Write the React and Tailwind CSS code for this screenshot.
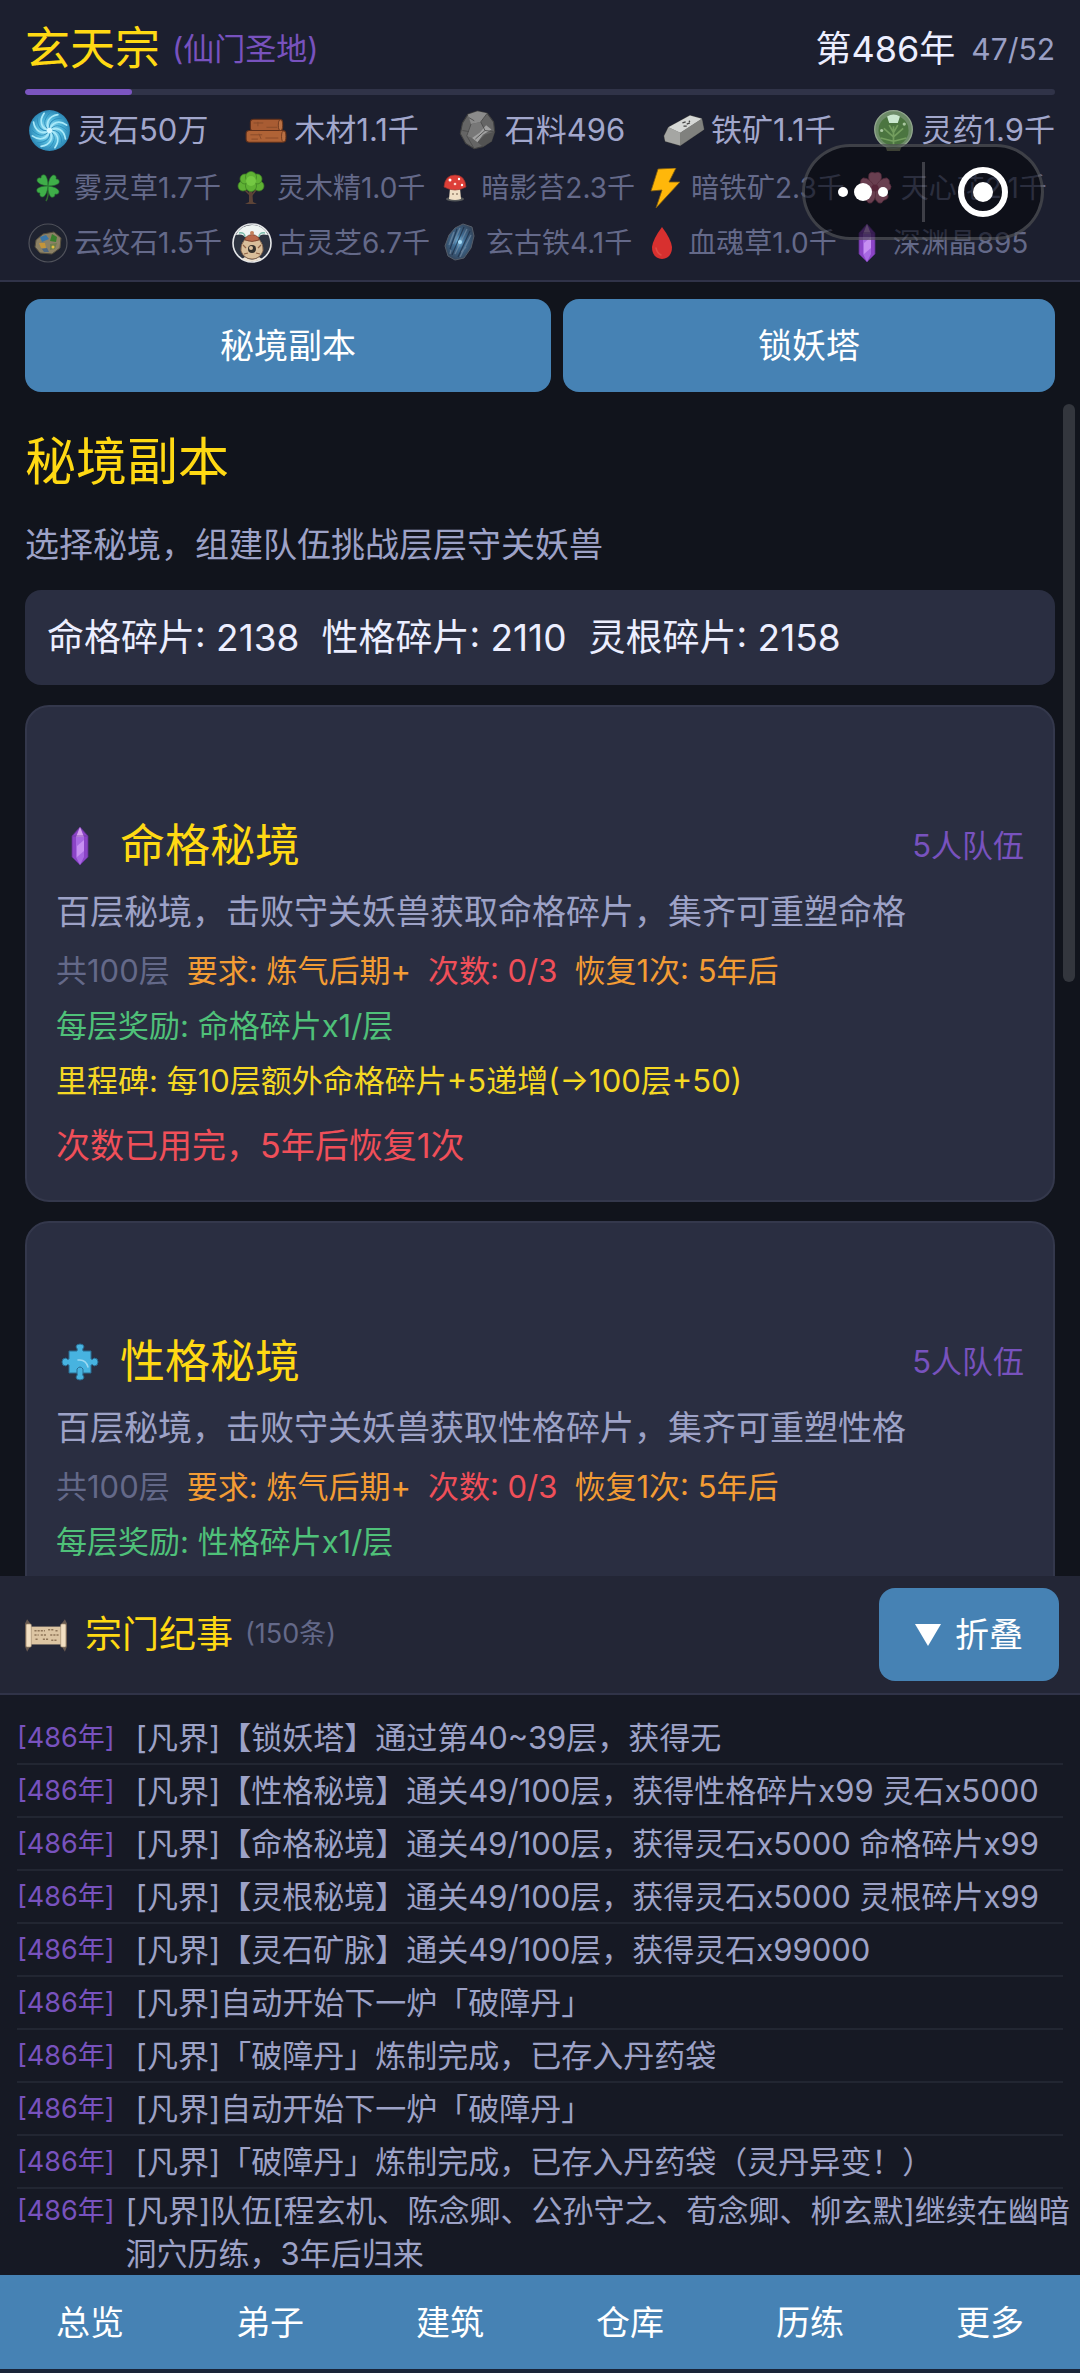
import React from "react";

const svgProps = { viewBox: "0 0 40 40", "aria-hidden": true, className: "h-full w-full" };

function SpiritStone() {
  const arms = [0, 45, 90, 135, 180, 225, 270, 315];
  return (
    <svg {...svgProps}>
      <defs>
        <radialGradient id="vortex">
          <stop offset="0" stopColor="#b5ecfa" />
          <stop offset="0.6" stopColor="#4fb6da" />
          <stop offset="1" stopColor="#2c86b4" />
        </radialGradient>
      </defs>
      <circle cx="20" cy="20" r="19" fill="url(#vortex)" />
      {arms.map((a) => (
        <g key={a} transform={`rotate(${a} 20 20)`} fill="none" strokeLinecap="round">
          <path d="M20 20C22 12 29 10 36 15" stroke="#a9e9f9" strokeWidth="1.6" />
          <path d="M20 20C24 14 30 14 36 20" stroke="#2d8fbd" strokeWidth="0.9" />
        </g>
      ))}
      <circle cx="20" cy="20" r="2.5" fill="#d5f6ff" />
    </svg>
  );
}

function Wood() {
  return (
    <svg {...svgProps}>
      <rect x="5" y="9.5" width="30" height="11" rx="3" fill="#a85c33" stroke="#5e2f1a" />
      <rect x="1" y="20" width="37" height="11" rx="3" fill="#b06336" stroke="#5e2f1a" />
      <ellipse cx="33" cy="15" rx="2" ry="5" fill="#b97043" stroke="#5e2f1a" strokeWidth="0.7" />
      <ellipse cx="36" cy="25.500" rx="2" ry="5" fill="#b97043" stroke="#5e2f1a" strokeWidth="0.7" />
      <path d="M8 13h9M20 17h10M5 24h11M19 27h12M6 28h6M12 12v4M13 23l2 5" stroke="#8a4c2a" strokeWidth="0.9" />
    </svg>
  );
}

function Rock() {
  return (
    <svg {...svgProps}>
      <path d="M11 5l9-3 9 2 6 8 1 9-3 9-8 5-8 2-8-5-5-9 2-10z" fill="#656565" stroke="#3f3f3f" />
      <path d="M11 5l9-3 9 2-6 8-9 2z" fill="#8b8b8b" />
      <path d="M14 14l9-2 4 8-9 8-8-3z" fill="#787878" />
      <path d="M28 15l5 4-8 5-5 7-5-4 7-5z" fill="#a2a2a2" />
      <path d="M27 24l9-3-3 9-8 5-5-4z" fill="#525252" />
      <path d="M14 14l-4 11 7 12M23 12l4 8-9 8M27 20l8 1M23 12l6-8M6 20l6 1M12 8l5 3" fill="none" stroke="#4a4a4a" strokeWidth="0.8" />
    </svg>
  );
}

function Ingot() {
  return (
    <svg {...svgProps}>
      <path d="M2 25l4-8 20-11 11 3 2 10-22 15-14-4z" fill="#6f706e" stroke="#4a4a48" strokeWidth="0.8" />
      <path d="M6 17l20-11 11 3-20 13z" fill="#d6d8d6" />
      <path d="M6 17l11 5 0 12-14-4-1-5z" fill="#a5a6a3" />
      <path d="M17 22l20-13 2 10-22 15z" fill="#80817e" />
      <path d="M19 13l3-1m1 2l3-1m-6 3l3 0m2-5l1 1" stroke="#444" strokeWidth="1.2" />
    </svg>
  );
}

function HerbOrb() {
  return (
    <svg {...svgProps}>
      <path d="M12 33h16l-2 6H14z" fill="#8f9770" />
      <circle cx="20" cy="19" r="17.500" fill="#6d8c68" stroke="#93a78f" strokeWidth="1.2" />
      <circle cx="20" cy="20" r="14" fill="#4b7540" />
      <path d="M20 33V16M20 26l-9-8M20 26l9-8M20 30l-12-3M20 30l12-3M20 22l-4-7M20 22l4-7" stroke="#7da866" strokeWidth="1.600" opacity="0.800" />
      <path d="M14 7q6-4 12 0l-2 6h-8z" fill="#cbe8d0" />
      <circle cx="9" cy="20" r="1.500" fill="#a9c7a0" />
      <circle cx="30" cy="14" r="1.500" fill="#a9c7a0" />
    </svg>
  );
}

function Clover() {
  return (
    <svg {...svgProps}>
      <path d="M20 19q1 9-2 14" fill="none" stroke="#2e6b2d" strokeWidth="1.5" />
      {[0, 90, 180, 270].map((a) => (
        <path key={a} transform={`rotate(${a} 20 18)`} d="M20 18Q11 17 9 13Q9 9 13 10Q13 6 17 7Q20 10 20 18z" fill="#3fae49" stroke="#256f2f" strokeWidth="0.6" />
      ))}
    </svg>
  );
}

function Tree() {
  return (
    <svg {...svgProps}>
      <path d="M18 20h3l1 14 4 2H14l4-2z" fill="#5d4437" />
      <path d="M20 28l5-6M19 27l-5-5" stroke="#5d4437" strokeWidth="1.500" />
      <g fill="#5fb234" stroke="#3c7d22" strokeWidth="0.7">
        <circle cx="12" cy="18" r="5" />
        <circle cx="28" cy="18" r="5" />
        <circle cx="14" cy="11" r="5" />
        <circle cx="26" cy="11" r="5" />
        <circle cx="20" cy="9" r="5.500" />
        <circle cx="20" cy="18" r="5.500" />
      </g>
      <circle cx="20" cy="13" r="5" fill="#74c843" />
    </svg>
  );
}

function Mushroom() {
  return (
    <svg {...svgProps}>
      <ellipse cx="20" cy="31" rx="9" ry="2.500" fill="#55585a" />
      <path d="M15 20h10l1 11q-6 2-12 0z" fill="#f0dfc5" />
      <path d="M9 19q1-12 11-12t11 12q-5 3-11 3t-11-3z" fill="#dd3f38" stroke="#96302c" strokeWidth="0.7" />
      <circle cx="15" cy="12" r="1.500" fill="#fff" />
      <circle cx="24" cy="11" r="1.200" fill="#fff" />
      <circle cx="20" cy="16" r="1.300" fill="#fbd6cf" />
      <circle cx="27" cy="17" r="1.200" fill="#fff" />
      <circle cx="18" cy="26" r="0.800" fill="#5b4436" />
      <circle cx="22" cy="26" r="0.800" fill="#5b4436" />
    </svg>
  );
}

function Bolt() {
  return (
    <svg {...svgProps}>
      <path d="M13 1L31 0 24 14 35 14 11 40 17 22 6 23z" fill="#ffb70a" stroke="#7c5a10" strokeWidth="0.8" />
    </svg>
  );
}

function Blossom() {
  return (
    <svg {...svgProps}>
      {[0, 72, 144, 216, 288].map((a) => (
        <path key={a} transform={`rotate(${a} 20 20)`} d="M20 20Q12 13 14 6Q16 3 20 5Q24 3 26 6Q28 13 20 20z" fill="#ff94b6" stroke="#c95f80" strokeWidth="0.7" />
      ))}
      <circle cx="20" cy="20" r="3.500" fill="#d45580" />
    </svg>
  );
}

function CloudStone() {
  return (
    <svg {...svgProps}>
      <circle cx="20" cy="20" r="19" fill="#1f2330" stroke="#50525b" strokeWidth="1.200" />
      <path d="M8 17l7-6 11-2 7 6-1 10-8 6-12-1-5-6z" fill="#8b8165" stroke="#544e3e" />
      <path d="M12 14l6-2 3 4-7 3z" fill="#3976a9" />
      <path d="M24 11l5 3-1 5-6-1z" fill="#37802d" />
      <path d="M11 20l6 0 1 5-5 0z" fill="#c4953a" />
      <path d="M22 21l7-1-2 6-5 1z" fill="#6f7f4e" />
      <path d="M14 26l5-1 2 4-5 0z" fill="#4d6681" />
      <circle cx="25" cy="24" r="1.500" fill="#e3c13f" />
    </svg>
  );
}

function SpiritUrn() {
  return (
    <svg {...svgProps}>
      <circle cx="20" cy="20" r="19" fill="#2d3340" stroke="#e5e7e9" strokeWidth="1.600" />
      <path d="M4 12Q9 2 20 2T36 12Q28 10 26 15H14Q11 10 4 12z" fill="#eff5f3" />
      <path d="M7 10q6-1 6 4M33 10q-6-1-6 4" fill="none" stroke="#79b9a9" strokeWidth="1.500" />
      <path d="M13 34q7 5 14 0l3 2q-10 5-20 0z" fill="#ece2d3" />
      <path d="M13 16h14q5 6 4 12-3 8-11 8T9 28q-1-6 4-12z" fill="#d9bf9b" stroke="#7b5a43" strokeWidth="0.800" />
      <path d="M13 15q7-7 14 0v2q-7 3-14 0z" fill="#b9694a" stroke="#74402c" strokeWidth="0.800" />
      <circle cx="20" cy="10" r="2" fill="#c2805c" />
      <circle cx="20" cy="26" r="4" fill="#35312c" />
      <circle cx="19" cy="25" r="2" fill="#d9bf9b" />
      <path d="M11 22l3 3M29 22l-3 3M12 31l4-1M28 31l-4-1" stroke="#8f6346" strokeWidth="1.200" />
    </svg>
  );
}

function DarkIron() {
  return (
    <svg {...svgProps}>
      <defs>
        <radialGradient id="ironGlow" cx="0.48" cy="0.48" r="0.55">
          <stop offset="0" stopColor="#79b9e0" />
          <stop offset="0.35" stopColor="#3f6c93" />
          <stop offset="1" stopColor="#33445a" />
        </radialGradient>
      </defs>
      <path d="M15 5l8-4 9 3 2 9-3 12-7 10-9 2-7-4-3-10 4-11z" fill="url(#ironGlow)" stroke="#555d69" />
      <path d="M14 9l-5 13M20 5l-7 16M27 6L15 31M31 12L20 34M11 27l-1 4M26 24l-5 5" stroke="#8497ab" strokeWidth="1.300" opacity="0.550" />
      <path d="M17 6l-7 20M24 4L12 32M30 8L18 34" stroke="#1c2b42" strokeWidth="1.200" opacity="0.700" />
      <circle cx="20" cy="19" r="2" fill="#a7dcf7" />
    </svg>
  );
}

function BloodDrop() {
  return (
    <svg {...svgProps}>
      <path d="M20 4Q29 16 30 24Q30 35 20 36Q10 35 10 24Q11 16 20 4z" fill="#d8302f" />
      <path d="M14 25q1 5 5 7" fill="none" stroke="#e04a44" strokeWidth="1.500" strokeLinecap="round" />
    </svg>
  );
}

function Crystal() {
  return (
    <svg {...svgProps}>
      <path d="M20 1l8 9v21l-8 8-8-8V10z" fill="#8b44c6" stroke="#5d318c" strokeWidth="0.800" />
      <path d="M20 1l-4 10h8z" fill="#d6a2f0" />
      <path d="M16 11h8v20l-4 8-4-8z" fill="#a869e2" />
      <path d="M24 14v11l-7 6V20z" fill="#c78ff2" />
      <path d="M12 10h16" stroke="#6b38a0" strokeWidth="0.700" />
    </svg>
  );
}

function Puzzle() {
  return (
    <svg {...svgProps}>
      <path
        d="M9 9h8q1-2-1-4 0-3 4-3t4 3q-2 2-1 4h8v8q2 1 3-1 4 0 4 4t-4 4q-1-2-3-1v8h-8q-1 2 1 4 0 3-4 3t-4-3q2-2 1-4H9v-8q-2-1-3 1-4 0-4-4t4-4q1 2 3 1z"
        fill="#47b3e0" stroke="#2a6c92"
      />
      <path d="M18 18q8-1 10 7" fill="none" stroke="#9cd9f2" strokeWidth="1.500" strokeLinecap="round" />
      <path d="M17 31v-4q3-4 6 0v4" fill="none" stroke="#2a6c92" strokeWidth="1" />
    </svg>
  );
}

function Scroll() {
  return (
    <svg {...svgProps}>
      <path d="M2 5l3 4v22l-3 5-2-5V9zM38 5l2 4v22l-2 5-3-5V9z" fill="#66584f" />
      <rect x="3" y="12" width="34" height="17" fill="#dcc5a3" />
      <rect x="1" y="9.500" width="5" height="22" rx="1" fill="#f2dfc2" stroke="#9a8469" strokeWidth="0.600" />
      <rect x="34" y="9.500" width="5" height="22" rx="1" fill="#f2dfc2" stroke="#9a8469" strokeWidth="0.600" />
      <path d="M9 16h10M22 15h5M29 16h3M9 20h4M15 20h6M24 20h8M10 24h3M17 24h5M25 25h6" stroke="#8f7659" strokeWidth="1.300" strokeDasharray="2 1" />
    </svg>
  );
}

const primary = [
  { icon: SpiritStone, text: "灵石50万" },
  { icon: Wood, text: "木材1.1千" },
  { icon: Rock, text: "石料496" },
  { icon: Ingot, text: "铁矿1.1千" },
  { icon: HerbOrb, text: "灵药1.9千" },
];

const rare = [
  [
    { icon: Clover, text: "雾灵草1.7千" },
    { icon: Tree, text: "灵木精1.0千" },
    { icon: Mushroom, text: "暗影苔2.3千" },
    { icon: Bolt, text: "暗铁矿2.3千" },
    { icon: Blossom, text: "天心花2.1千" },
  ],
  [
    { icon: CloudStone, text: "云纹石1.5千" },
    { icon: SpiritUrn, text: "古灵芝6.7千" },
    { icon: DarkIron, text: "玄古铁4.1千" },
    { icon: BloodDrop, text: "血魂草1.0千" },
    { icon: Crystal, text: "深渊晶895" },
  ],
];

const realms = [
  {
    icon: Crystal,
    name: "命格",
    milestone: "里程碑: 每10层额外命格碎片+5递增(→100层+50)",
    notice: "次数已用完，5年后恢复1次",
  },
  { icon: Puzzle, name: "性格" },
];

const logs = [
  "[凡界]【锁妖塔】通过第40~39层，获得无",
  "[凡界]【性格秘境】通关49/100层，获得性格碎片x99 灵石x5000",
  "[凡界]【命格秘境】通关49/100层，获得灵石x5000 命格碎片x99",
  "[凡界]【灵根秘境】通关49/100层，获得灵石x5000 灵根碎片x99",
  "[凡界]【灵石矿脉】通关49/100层，获得灵石x99000",
  "[凡界]自动开始下一炉「破障丹」",
  "[凡界]「破障丹」炼制完成，已存入丹药袋",
  "[凡界]自动开始下一炉「破障丹」",
  "[凡界]「破障丹」炼制完成，已存入丹药袋（灵丹异变！）",
];

function Capsule() {
  return (
    <div className="absolute top-[144px] right-9 flex h-24 w-[242px] items-center rounded-full border-[3px] border-white/20 bg-[#05070b]/60">
      <button type="button" aria-label="更多操作" className="flex h-full flex-1 items-center justify-center gap-[6px]">
        <span className="size-[10px] rounded-full bg-white" />
        <span className="size-[18px] rounded-full bg-white" />
        <span className="size-[10px] rounded-full bg-white" />
      </button>
      <span className="h-[60px] w-[3px] bg-white/20" />
      <button type="button" aria-label="关闭" className="flex h-full flex-1 items-center justify-center">
        <span className="flex size-[50px] items-center justify-center rounded-full border-[6px] border-white">
          <span className="size-5 rounded-full bg-white" />
        </span>
      </button>
    </div>
  );
}

function Header() {
  return (
    <header className="relative shrink-0 border-b-2 border-[#303348] bg-[#1c1f2f] px-[25px] pt-5 pb-[10px]">
      <div className="flex h-[58px] items-center justify-between">
        <div className="flex items-center gap-3">
          <h1 className="text-[45px] leading-[58px] text-[#ffd913]">玄天宗</h1>
          <span className="text-[31px] text-[#7852be]">(仙门圣地)</span>
        </div>
        <div className="flex items-center gap-4">
          <span className="text-[36px] text-[#eceeff]">第486年</span>
          <span className="text-[30px] text-[#9a9fc4]">47/52</span>
        </div>
      </div>
      <div role="progressbar" aria-label="年度进度" aria-valuenow={10} className="mt-[11px] h-[6px] overflow-hidden rounded-full bg-[#303348]">
        <div className="h-full w-[10.4%] rounded-full bg-[#7b55c0]" />
      </div>
      <ul className="mt-[10px] flex h-[50px] items-center justify-between pl-[3px] text-[31px] text-[#a2a7cc]">
        {primary.map(({ icon: Icon, text }) => (
          <li key={text} className="flex items-center gap-[6px] whitespace-nowrap">
            <span className="size-[43px]"><Icon /></span>
            {text}
          </li>
        ))}
      </ul>
      <div className="mt-[5px]">
        {rare.map((row, i) => (
          <ul key={i} className="flex h-[55px] items-center gap-[10px] pl-[3px] text-[28px] text-[#646989]">
            {row.map(({ icon: Icon, text }) => (
              <li key={text} className="flex items-center gap-[6px] whitespace-nowrap">
                <span className="size-10"><Icon /></span>
                {text}
              </li>
            ))}
          </ul>
        ))}
      </div>
      <Capsule />
    </header>
  );
}

function RealmCard({ icon: Icon, name, milestone, notice }) {
  return (
    <article className="rounded-3xl border-2 border-[#34384c] bg-[#2a2e41] px-[29px] pt-[106px] pb-7">
      <div className="flex h-[66px] items-center">
        <span className="ml-1 size-10"><Icon /></span>
        <h3 className="ml-5 text-[45px] leading-[66px] text-[#ffd913]">{name}秘境</h3>
        <span className="ml-auto text-[31px] text-[#7852be]">5人队伍</span>
      </div>
      <p className="mt-[7px] text-[34px] leading-[52px] text-[#9da2c7]">百层秘境，击败守关妖兽获取{name}碎片，集齐可重塑{name}</p>
      <div className="mt-[5px] flex gap-[17px] text-[31px] leading-[55px] text-[#f39c34]">
        <span className="text-[#646989]">共100层</span>
        <span>要求: 炼气后期+</span>
        <span className="text-[#f04f59]">次数: 0/3</span>
        <span>恢复1次: 5年后</span>
      </div>
      <p className="text-[31px] leading-[55px] text-[#4fc179]">每层奖励: {name}碎片x1/层</p>
      {milestone && <p className="text-[31px] leading-[55px] text-[#f5d824]">{milestone}</p>}
      {notice && <p className="mt-3 text-[34px] leading-[52px] text-[#f04f59]">{notice}</p>}
    </article>
  );
}

export default function App() {
  return (
    <div className="flex h-screen flex-col overflow-hidden bg-[#11141c] font-['Inter','Noto_Sans_CJK_SC',sans-serif] font-normal">
      <Header />
      <div className="flex shrink-0 gap-3 px-[25px] pt-[17px] text-[34px] text-white">
        <button type="button" className="h-[93px] flex-auto rounded-2xl bg-[#4682b4]">秘境副本</button>
        <button type="button" className="h-[93px] flex-auto rounded-2xl bg-[#4682b4]">锁妖塔</button>
      </div>
      <main className="relative mt-3 min-h-0 flex-1 overflow-hidden px-[25px]">
        <h2 className="mt-6 text-[51px] leading-[68px] text-[#ffd913]">秘境副本</h2>
        <p className="mt-[22px] text-[34px] leading-[54px] text-[#9da2c7]">选择秘境，组建队伍挑战层层守关妖兽</p>
        <div className="mt-[18px] flex h-[95px] items-center gap-[22px] rounded-2xl bg-[#2a2e41] px-[22px] text-[37px] text-[#eceeff]">
          <span>命格碎片: 2138</span>
          <span>性格碎片: 2110</span>
          <span>灵根碎片: 2158</span>
        </div>
        <div className="mt-5 flex flex-col gap-[19px]">
          {realms.map((r) => (
            <RealmCard key={r.name} {...r} />
          ))}
        </div>
        <div className="absolute top-0 right-[5px] h-[578px] w-3 rounded-full bg-[#33363d]" />
      </main>
      <section className="shrink-0 bg-[#161924]">
        <div className="flex h-[119px] items-center border-b-2 border-[#303348] bg-[#232636] pr-[21px] pl-[25px]">
          <span className="size-[42px]"><Scroll /></span>
          <h2 className="ml-[18px] text-[37px] text-[#ffd913]">宗门纪事</h2>
          <span className="ml-3 text-[27px] text-[#646989]">(150条)</span>
          <button type="button" className="ml-auto flex h-[93px] items-center gap-[14px] rounded-2xl bg-[#4682b4] px-9 text-[34px] text-white">
            <svg viewBox="0 0 26 22" aria-hidden="true" className="h-[22px] w-[26px]">
              <path d="M0 0h26L13 22z" fill="currentColor" />
            </svg>
            折叠
          </button>
        </div>
        <ul className="pt-[17px] pr-[6px] pl-[17px] text-[31px] text-[#9da2c7]">
          {logs.map((text, i) => (
            <li key={i} className="mr-[11px] flex h-[53px] border-b-2 border-[#222632] leading-[51px] whitespace-nowrap">
              <span className="text-[27px] text-[#7852be]">[486年]</span>
              <span className="ml-[21px]">{text}</span>
            </li>
          ))}
          <li className="flex leading-[43px]">
            <span className="shrink-0 text-[27px] text-[#7852be]">[486年]</span>
            <span className="ml-[11px]">[凡界]队伍[程玄机、陈念卿、公孙守之、荀念卿、柳玄默]继续在幽暗洞穴历练，3年后归来</span>
          </li>
        </ul>
      </section>
      <nav className="grid shrink-0 grid-cols-6 border-b-4 border-[#1a2438] bg-[#4682b4] text-[34px] text-white">
        {["总览", "弟子", "建筑", "仓库", "历练", "更多"].map((t) => (
          <button key={t} type="button" className="h-[94px]">{t}</button>
        ))}
      </nav>
    </div>
  );
}
